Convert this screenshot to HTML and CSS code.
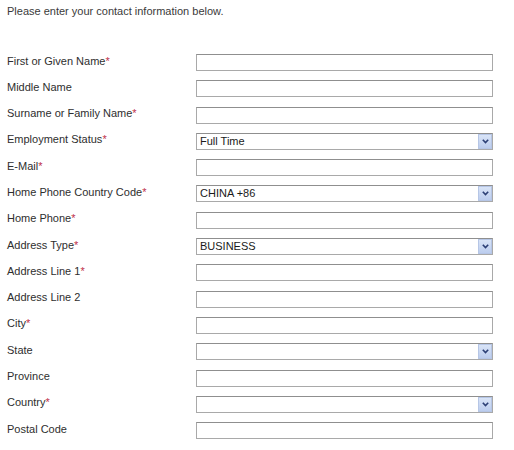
FILE: index.html
```html
<!DOCTYPE html>
<html>
<head>
<meta charset="utf-8">
<link rel="stylesheet" href="styles.css">
</head>
<body>
<p class="intro">Please enter your contact information below.</p>
<form class="form">
  <label class="lbl">First or Given Name<span class="req">*</span></label>
  <div class="field"></div>
  <label class="lbl">Middle Name</label>
  <div class="field"></div>
  <label class="lbl">Surname or Family Name<span class="req">*</span></label>
  <div class="field"></div>
  <label class="lbl">Employment Status<span class="req">*</span></label>
  <div class="field select"><span class="val">Full Time</span><span class="arrow"><svg width="7" height="5" viewBox="0 0 7 5"><path d="M0.8 0.8 L3.5 3.6 L6.2 0.8" fill="none" stroke="#2c3f75" stroke-width="1.6"/></svg></span></div>
  <label class="lbl">E-Mail<span class="req">*</span></label>
  <div class="field"></div>
  <label class="lbl">Home Phone Country Code<span class="req">*</span></label>
  <div class="field select"><span class="val">CHINA +86</span><span class="arrow"><svg width="7" height="5" viewBox="0 0 7 5"><path d="M0.8 0.8 L3.5 3.6 L6.2 0.8" fill="none" stroke="#2c3f75" stroke-width="1.6"/></svg></span></div>
  <label class="lbl">Home Phone<span class="req">*</span></label>
  <div class="field"></div>
  <label class="lbl">Address Type<span class="req">*</span></label>
  <div class="field select"><span class="val">BUSINESS</span><span class="arrow"><svg width="7" height="5" viewBox="0 0 7 5"><path d="M0.8 0.8 L3.5 3.6 L6.2 0.8" fill="none" stroke="#2c3f75" stroke-width="1.6"/></svg></span></div>
  <label class="lbl">Address Line 1<span class="req">*</span></label>
  <div class="field"></div>
  <label class="lbl">Address Line 2</label>
  <div class="field"></div>
  <label class="lbl">City<span class="req">*</span></label>
  <div class="field"></div>
  <label class="lbl">State</label>
  <div class="field select"><span class="val"></span><span class="arrow"><svg width="7" height="5" viewBox="0 0 7 5"><path d="M0.8 0.8 L3.5 3.6 L6.2 0.8" fill="none" stroke="#2c3f75" stroke-width="1.6"/></svg></span></div>
  <label class="lbl">Province</label>
  <div class="field"></div>
  <label class="lbl">Country<span class="req">*</span></label>
  <div class="field select"><span class="val"></span><span class="arrow"><svg width="7" height="5" viewBox="0 0 7 5"><path d="M0.8 0.8 L3.5 3.6 L6.2 0.8" fill="none" stroke="#2c3f75" stroke-width="1.6"/></svg></span></div>
  <label class="lbl">Postal Code</label>
  <div class="field"></div>
</form>
</body>
</html>
```
FILE: styles.css
```css
html, body {
  margin: 0;
  padding: 0;
  background: #fff;
}
body {
  font-family: "Liberation Sans", Arial, sans-serif;
  font-size: 11px;
  color: #2e2e2e;
}
.intro {
  margin: 0;
  padding: 5px 0 0 7px;
  line-height: 13px;
  color: #3a3a3a;
}
.form {
  display: grid;
  grid-template-columns: 189px 297px;
  grid-auto-rows: 17px;
  row-gap: 9.3px;
  align-items: center;
  padding: 36px 0 0 7px;
}
.lbl {
  line-height: 13px;
  padding-bottom: 3px;
}
.req {
  color: #c0304a;
}
.field {
  box-sizing: border-box;
  height: 17px;
  border: 1px solid #a9a9a9;
  border-top-color: #8f8f8f;
  background: #fff;
  display: flex;
  align-items: center;
}
.select .val {
  flex: 1;
  padding-left: 3px;
  color: #1a1a1a;
  line-height: 13px;
}
.arrow {
  box-sizing: border-box;
  width: 14px;
  height: 15px;
  margin-right: 0;
  background: linear-gradient(#d9e4f7, #bccdee);
  border: 1px solid #b6c6e6;
  display: flex;
  align-items: center;
  justify-content: center;
}
.arrow svg {
  display: block;
}
```
